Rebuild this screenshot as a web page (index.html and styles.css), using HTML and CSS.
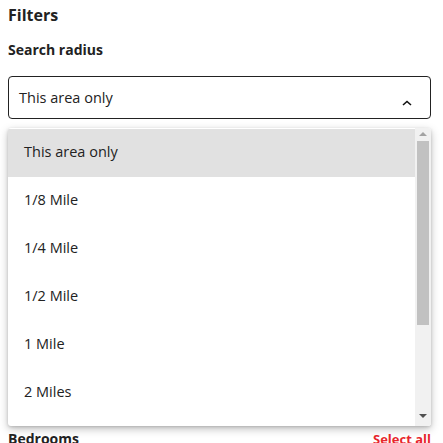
FILE: index.html
```html
<!DOCTYPE html>
<html>
<head>
<meta charset="utf-8">
<link rel="stylesheet" href="styles.css">
</head>
<body>
<div class="page">
  <h1 class="title">Filters</h1>
  <h2 class="label">Search radius</h2>
  <div class="select-wrap">
    <div class="select">
      <span class="select-value">This area only</span>
      <svg class="chev" width="10" height="6" viewBox="0 0 10 6"><path d="M1 5 L5 1.5 L9 5" fill="none" stroke="#111" stroke-width="1.6"/></svg>
    </div>
    <div class="menu">
      <ul class="options">
        <li class="opt active">This area only</li>
        <li class="opt">1/8 Mile</li>
        <li class="opt">1/4 Mile</li>
        <li class="opt">1/2 Mile</li>
        <li class="opt">1 Mile</li>
        <li class="opt">2 Miles</li>
      </ul>
      <div class="scrollbar">
        <div class="arrow up"></div>
        <div class="thumb"></div>
        <div class="arrow down"></div>
      </div>
    </div>
  </div>
  <div class="row">
    <h2 class="label">Bedrooms</h2>
    <span class="link">Select all</span>
  </div>
</div>
</body>
</html>
```
FILE: styles.css
```css
html, body { margin: 0; padding: 0; background: #fff; }
body { font-family: "Open Sans", "Noto Sans", sans-serif; color: #222; overflow: hidden; }
.page { padding: 4px 12px 0 8px; }
.title { margin: 0; font-size: 16px; font-weight: 700; line-height: 22px; color: #222; }
.label { margin: 0; font-size: 14px; font-weight: 700; line-height: 18px; color: #222; }
.page > .label { margin-top: 15px; }
.select-wrap { position: relative; margin-top: 17px; }
.select {
  height: 41px; border: 1px solid #222; border-radius: 4px;
  display: flex; align-items: center; justify-content: space-between;
  padding: 0 18px 0 10px;
}
.select-value { font-size: 14.5px; color: #222; }
.chev { margin-top: 11px; }
.menu {
  position: absolute; left: 0; right: 0; top: 52px;
  height: 298px; background: #fff; border-radius: 3px;
  box-shadow: 0 3px 8px rgba(0,0,0,0.25), 0 1px 3px rgba(0,0,0,0.15);
  display: flex; overflow: hidden;
}
.options { list-style: none; margin: 0; padding: 1px 0 0 0; flex: 1; }
.opt { height: 48px; box-sizing: border-box; padding-bottom: 3px; display: flex; align-items: center; padding-left: 16px; font-size: 14.5px; color: #222; }
.opt.active { background: #e1e1e1; }
.scrollbar { width: 16px; background: #f1f1f1; display: flex; flex-direction: column; align-items: center; }
.arrow { width: 0; height: 0; border-left: 4px solid transparent; border-right: 4px solid transparent; }
.arrow.up { border-bottom: 4px solid #a3a3a3; margin-top: 4px; margin-bottom: 5px; }
.thumb { width: 12px; height: 184px; background: #c1c1c1; }
.arrow.down { border-top: 4px solid #505050; margin-top: auto; margin-bottom: 8px; }
.row { display: flex; justify-content: space-between; align-items: baseline; margin-top: 311px; }
.link { color: #e8262c; font-size: 13px; font-weight: 700; }
```
